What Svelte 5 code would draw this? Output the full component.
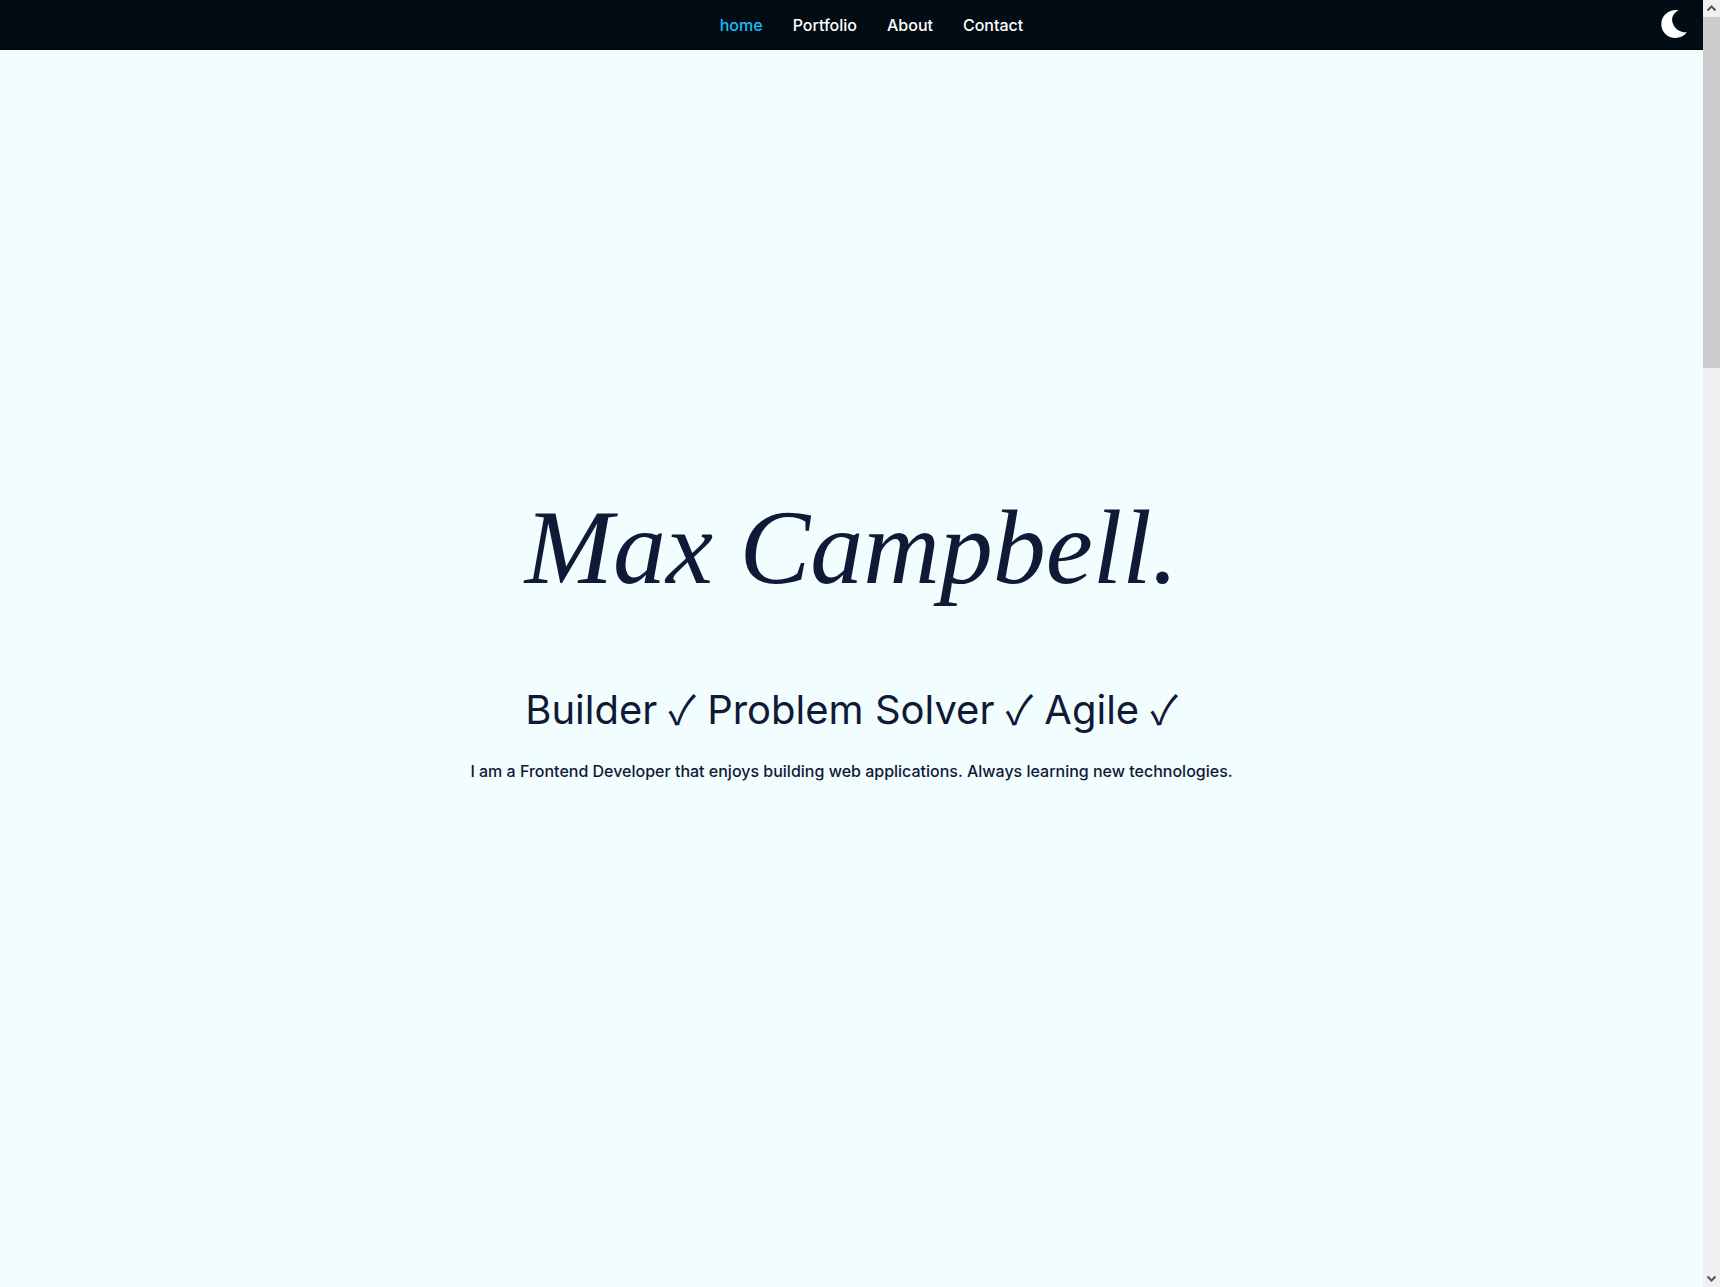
<script lang="ts">
  const links = [
    { label: 'home', href: '#home' },
    { label: 'Portfolio', href: '#portfolio' },
    { label: 'About', href: '#about' },
    { label: 'Contact', href: '#contact' },
  ];
  let active = $state('home');
</script>

<div class="window">
  <div class="page">
    <header>
      <nav>
        <ul>
          {#each links as link}
            <li>
              <a href={link.href} class:active={active === link.label} onclick={() => (active = link.label)}>{link.label}</a>
            </li>
          {/each}
        </ul>
      </nav>
      <button class="theme" aria-label="Toggle dark mode">
        <svg viewBox="0 0 26 28" width="26" height="28"><path d="M17.3 0.2C11.5 3.4 9.5 9 12.3 14.6C14.8 20 20 22.8 25.8 22.3C23.2 26 19 28 14.5 28C6.5 28 0.3 22 0.3 14.2C0.3 5.5 8 -0.8 17.3 0.2Z" /></svg>
      </button>
    </header>
    <main>
      <h1>Max Campbell.</h1>
      <h2>Builder <span>✓</span> Problem Solver <span>✓</span> Agile <span>✓</span></h2>
      <p>I am a Frontend Developer that enjoys building web applications. Always learning new technologies.</p>
    </main>
  </div>
  <div class="scrollbar" aria-hidden="true">
    <svg viewBox="0 0 17 17" width="17" height="17"><path d="M4.5 10.5L8.5 6.5L12.5 10.5" /></svg>
    <div class="track"><div class="thumb"></div></div>
    <svg viewBox="0 0 17 17" width="17" height="17"><path d="M4.5 6.5L8.5 10.5L12.5 6.5" /></svg>
  </div>
</div>

<style>
  :global(body) {
    margin: 0;
  }
  .window {
    display: flex;
    min-height: 100vh;
    font-family: Inter, 'Liberation Sans', sans-serif;
    font-size: 16px;
    font-weight: 500;
    color: #101935;
    background: #f2fdff;
  }
  .page {
    flex: 1;
    display: flex;
    flex-direction: column;
  }
  header {
    display: grid;
    grid-template-columns: 1fr auto 1fr;
    align-items: center;
    height: 49px;
    background: #020c14;
    border-bottom: 1px solid #000;
  }
  nav {
    grid-column: 2;
  }
  ul {
    display: flex;
    gap: 30px;
    margin: 0;
    padding: 0 0 0 40px;
    list-style: none;
  }
  a {
    color: #fff;
    text-decoration: none;
  }
  a.active {
    color: #16bff4;
  }
  .theme {
    justify-self: end;
    display: flex;
    margin: 0 16px 2px 0;
    padding: 0;
    border: 0;
    background: none;
    cursor: pointer;
  }
  .theme svg {
    fill: #fff;
  }
  main {
    flex: 1;
    display: flex;
    flex-direction: column;
    align-items: center;
    justify-content: center;
    padding-bottom: 86px;
    text-align: center;
  }
  h1 {
    margin: 0;
    font: italic 400 106px/160px 'Liberation Serif', serif;
  }
  h2 {
    margin: 54px 0 24px;
    font-size: 40px;
    font-weight: 400;
    line-height: 50px;
  }
  h2 span {
    font-family: 'Noto Sans CJK JP', 'DejaVu Sans', sans-serif;
  }
  p {
    margin: 0;
    line-height: 24px;
  }
  .scrollbar {
    width: 17px;
    display: flex;
    flex-direction: column;
    background: #f0f0f0;
  }
  .scrollbar svg {
    fill: none;
    stroke: #555;
    stroke-width: 2;
  }
  .track {
    flex: 1;
  }
  .thumb {
    height: 28%;
    background: #cdcdcd;
  }
</style>
